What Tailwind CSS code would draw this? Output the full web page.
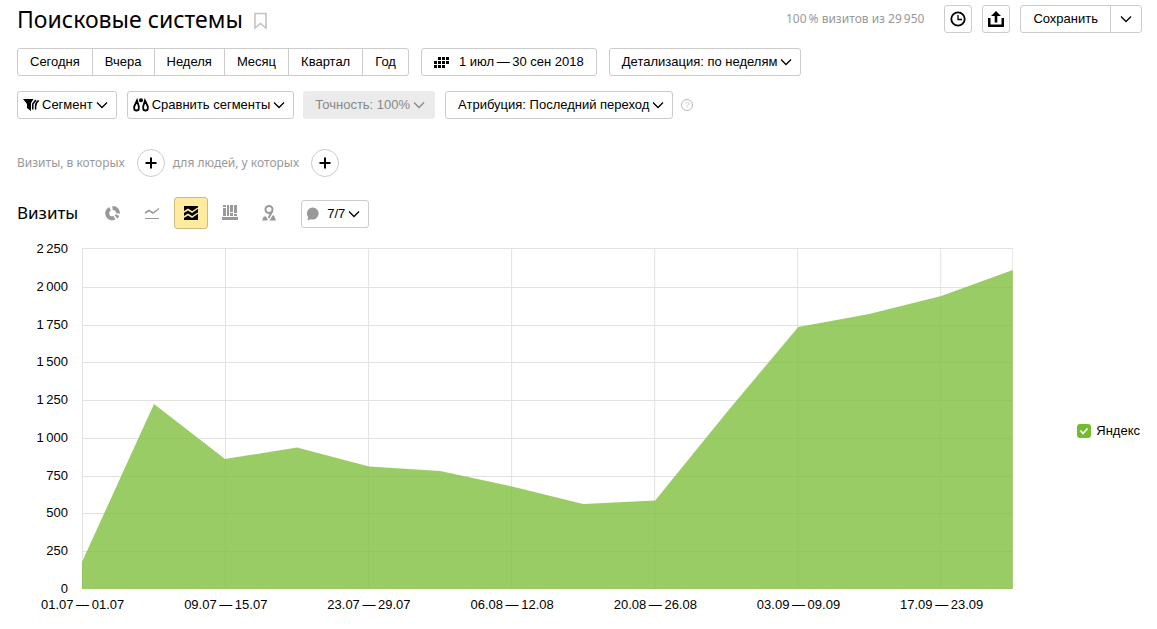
<!DOCTYPE html>
<html lang="ru">
<head>
<meta charset="utf-8">
<title>Поисковые системы</title>
<script src="https://cdn.jsdelivr.net/npm/@tailwindcss/browser@4"></script>
</head>
<body class="bg-white text-black text-[13px] leading-5 font-['Liberation_Sans',Arial,sans-serif]">
<svg class="hidden" aria-hidden="true">
  <symbol id="chev" viewBox="0 0 12 12"><path d="M1 3.5 6 8.5 11 3.5" fill="none" stroke="currentColor" stroke-width="1.3"/></symbol>
  <symbol id="plus" viewBox="0 0 12 12"><path d="M6 0.5v11M0.5 6h11" fill="none" stroke="currentColor" stroke-width="2"/></symbol>
</svg>

<header class="flex items-center pl-[17px] pr-[15px] pt-[5px] h-[33px]">
  <h1 class="text-[23px] leading-7 font-['Noto_Sans','Open_Sans',sans-serif]">Поисковые системы</h1>
  <button class="ml-[11px] mt-1 text-[#c4c4c4]" aria-label="Добавить в избранное"><svg class="w-[13px] h-[18px] block" viewBox="0 0 13 18"><path d="M1 1.5h11v14.5L6.5 11.5 1 16z" fill="none" stroke="currentColor" stroke-width="1.6"/></svg></button>
  <p class="ml-auto text-[#999] text-xs font-['Noto_Sans','Open_Sans',sans-serif]">100&thinsp;% визитов из 29&thinsp;950</p>
  <button class="ml-5 size-7 border border-[#ccc] rounded-[3px] flex items-center justify-center" aria-label="История"><svg class="size-4" viewBox="0 0 16 16" fill="none" stroke="#000"><circle cx="8" cy="8" r="6.7" stroke-width="1.8"/><path d="M8 4v4.5h4" stroke-width="1.3"/></svg></button>
  <button class="ml-[10px] size-7 border border-[#ccc] rounded-[3px] flex items-center justify-center" aria-label="Экспорт"><svg class="size-4" viewBox="0 0 16 16"><path d="M0 7h2.5v6.5h11V7H16v9H0z"/><path d="M8 0l5 5H9.3v6.5H6.7V5H3z"/></svg></button>
  <div class="ml-[10px] flex h-7 border border-[#ccc] rounded-[3px]">
    <button class="px-3">Сохранить</button>
    <button class="w-[31px] border-l border-[#ccc] flex items-center justify-center" aria-label="Ещё"><svg class="size-3"><use href="#chev"/></svg></button>
  </div>
</header>

<main>
<div class="flex mt-[15px] pl-[17px] whitespace-nowrap">
  <div class="flex h-7 border border-[#ccc] rounded-[3px] divide-x divide-[#ccc]">
    <button class="px-3">Сегодня</button><button class="px-3">Вчера</button><button class="px-3">Неделя</button><button class="px-3">Месяц</button><button class="px-3">Квартал</button><button class="px-3">Год</button>
  </div>
  <button class="ml-3 h-7 border border-[#ccc] rounded-[3px] px-3 flex items-center"><svg class="w-[15px] h-[11px] mr-[10px]" viewBox="0 0 15 11"><path d="M4 0h3v3H4zM8 0h3v3H8zM12 0h3v3h-3zM0 4h3v3H0zM4 4h3v3H4zM8 4h3v3H8zM12 4h3v3h-3zM0 8h3v3H0zM4 8h3v3H4zM8 8h3v3H8z"/></svg>1 июл&thinsp;—&thinsp;30 сен 2018</button>
  <button class="ml-3 h-7 border border-[#ccc] rounded-[3px] pl-3 pr-2 flex items-center gap-[3px]">Детализация: по неделям<svg class="size-3"><use href="#chev"/></svg></button>
</div>

<div class="flex items-center mt-[15px] pl-[17px] whitespace-nowrap">
  <button class="h-7 border border-[#ccc] rounded-[3px] pl-[5px] pr-2 flex items-center gap-[3px]"><svg class="w-4 h-3" viewBox="0 0 16 12"><path d="M0 0h10.500L8 4V12L4 9V5z"/><path d="M12.800 1 9.800 5V10.500M15.700 1.500Q12.600 3.500 12.600 7V10.500" fill="none" stroke="#000" stroke-width="1.500"/></svg>Сегмент<svg class="size-3"><use href="#chev"/></svg></button>
  <button class="ml-[10px] h-7 border border-[#ccc] rounded-[3px] pl-[5px] pr-2 flex items-center gap-[3px]"><svg class="w-4 h-[14px]" viewBox="0 0 16 14"><path d="M4 2.500 1.200 8.500v2q0 2 2.300 2t2.300-2v-2zM12 2.500l-1.800 6v2q0 2 2.300 2t2.300-2v-2z" fill="none" stroke="#000" stroke-width="1.800"/><circle cx="8" cy="2.300" r="2"/></svg>Сравнить сегменты<svg class="size-3"><use href="#chev"/></svg></button>
  <button disabled class="ml-[9px] h-7 bg-[#ebebeb] text-[#888] rounded-[3px] pl-3 pr-[10px] flex items-center gap-[3px]">Точность: 100%<svg class="size-3"><use href="#chev"/></svg></button>
  <button class="ml-[10px] h-7 border border-[#ccc] rounded-[3px] pl-3 pr-2 flex items-center gap-[3px]">Атрибуция: Последний переход<svg class="size-3"><use href="#chev"/></svg></button>
  <button class="ml-2 size-3 border border-[#bbb] rounded-full text-[#bbb] text-[8px] leading-none flex items-center justify-center" aria-label="Справка">?</button>
</div>

<div class="flex items-center mt-[30px] pl-[17px] text-[#999] text-xs font-['Noto_Sans','Open_Sans',sans-serif] whitespace-nowrap">
  <span>Визиты, в которых</span>
  <button class="ml-3 mr-2 size-7 border border-[#ccc] rounded-full flex items-center justify-center text-black" aria-label="Добавить условие визитов"><svg class="size-3"><use href="#plus"/></svg></button>
  <span>для людей, у которых</span>
  <button class="ml-3 size-7 border border-[#ccc] rounded-full flex items-center justify-center text-black" aria-label="Добавить условие людей"><svg class="size-3"><use href="#plus"/></svg></button>
</div>

<div class="flex items-center mt-5 pl-[17px] text-[#999]">
  <h2 class="text-[17px] leading-7 text-black font-['Noto_Sans','Open_Sans',sans-serif]">Визиты</h2>
  <div class="flex ml-[18px] gap-[5px]">
    <button class="w-[34px] h-8 flex items-center justify-center" aria-label="Круговая диаграмма"><svg class="size-4" viewBox="0 0 16 16" fill="none" stroke="currentColor" stroke-width="4"><path d="M5 3.800A5 5 0 0 0 9.500 12.800M7.500 3A5 5 0 0 1 13 8.300M12.500 10.200A5 5 0 0 1 11 12"/></svg></button>
    <button class="w-[34px] h-8 flex items-center justify-center" aria-label="Линии"><svg class="size-4" viewBox="0 0 16 16" fill="none" stroke="currentColor"><path d="M1 8 5 5.500 9 8 15 3.500" stroke-width="1.500"/><path d="M1 13.500h14" stroke-width="1"/></svg></button>
    <button class="w-[34px] h-8 flex items-center justify-center bg-[#ffeba0] border border-[#ccbc80] rounded-[3px] text-black" aria-label="Области"><svg class="size-4" viewBox="0 0 16 16"><path d="M1 1h14v14H1z"/><path d="M1 7 5 4.500 9 7l6-4M1 12l4-2.500L9 12l6-4" fill="none" stroke="#ffeba0" stroke-width="1.500"/></svg></button>
    <button class="w-[34px] h-8 flex items-center justify-center" aria-label="Столбцы"><svg class="size-4" viewBox="0 0 16 16" fill="currentColor"><path d="M1 0h3v2H1zM1 3h3v8H1zM5 0h2v11H5zM8 0h3v7H8zM8 8h3v3H8zM12 0h3v8h-3zM12 9h3v2h-3zM0 12h16v3H0z"/></svg></button>
    <button class="w-[34px] h-8 flex items-center justify-center" aria-label="Карта"><svg class="size-4" viewBox="0 0 16 16"><circle cx="8" cy="4.500" r="3.500" fill="none" stroke="currentColor" stroke-width="2"/><path d="M11.300 6 7.500 13" stroke="currentColor" stroke-width="2"/><path d="M2.800 11.500H5L6.800 14.500 6 15.500H1zM11.500 10.500H13l2 5H8.500z" fill="currentColor"/></svg></button>
  </div>
  <button class="ml-[15px] mt-px h-7 border border-[#ccc] rounded-[3px] pl-1 pr-2 flex items-center text-black"><svg class="size-[14px] mr-[7px]" viewBox="0 0 14 14"><path d="M7 0.500a6 6 0 1 1-2.200 11.700L1.500 13.500l.6-3.500A6 6 0 0 1 7 .5z" fill="#999"/></svg>7/7<svg class="size-3 ml-[3px]"><use href="#chev"/></svg></button>
</div>

<section class="flex items-center mt-[10px]" aria-label="График визитов">
  <div class="flex-1">
    <div class="flex">
      <div class="w-[68px] mr-[14px] h-[360px] flex flex-col justify-between text-right">
        <span>2&thinsp;250</span><span>2&thinsp;000</span><span>1&thinsp;750</span><span>1&thinsp;500</span><span>1&thinsp;250</span><span>1&thinsp;000</span><span>750</span><span>500</span><span>250</span><span>0</span>
      </div>
      <svg class="flex-1 min-w-0 h-[341px] mt-[9px]" viewBox="0 0 931 341" preserveAspectRatio="none">
        <path d="M0 .5H931M0 39.500H931M0 77.500H931M0 114.500H931M0 152.500H931M0 190.500H931M0 228.500H931M0 265.500H931M0 303.500H931M.5 0V341M143.500 0V341M286.500 0V341M429.500 0V341M572.500 0V341M715.500 0V341M858.500 0V341M930.500 0V341" fill="none" stroke="#e2e2e2"/>
        <path d="M0 314 72 156 143 211 215 199.500 287 218.500 358 223 430 238.500 501 256 573 252.500 644 165 716 79 787 66 859 48 930.500 22V341H0z" fill="#7fbf3f" fill-opacity=".8"/>
      </svg>
    </div>
    <div class="grid grid-cols-7 pl-[11px] -mt-1 text-center">
      <span>01.07&thinsp;—&thinsp;01.07</span><span>09.07&thinsp;—&thinsp;15.07</span><span>23.07&thinsp;—&thinsp;29.07</span><span>06.08&thinsp;—&thinsp;12.08</span><span>20.08&thinsp;—&thinsp;26.08</span><span>03.09&thinsp;—&thinsp;09.09</span><span>17.09&thinsp;—&thinsp;23.09</span>
    </div>
  </div>
  <label class="ml-16 mr-[17px] mt-2 flex items-center gap-[5px]">
    <span class="relative flex"><input type="checkbox" checked class="appearance-none size-[14px] rounded-[3px] bg-[#75bb2f]"><svg class="absolute inset-0 size-[14px] pointer-events-none" viewBox="0 0 14 14"><path d="M3.500 6.500 6 9.500 10.500 4.500" fill="none" stroke="#fff" stroke-width="1.800"/></svg></span>
    Яндекс
  </label>
</section>
</main>
</body>
</html>
